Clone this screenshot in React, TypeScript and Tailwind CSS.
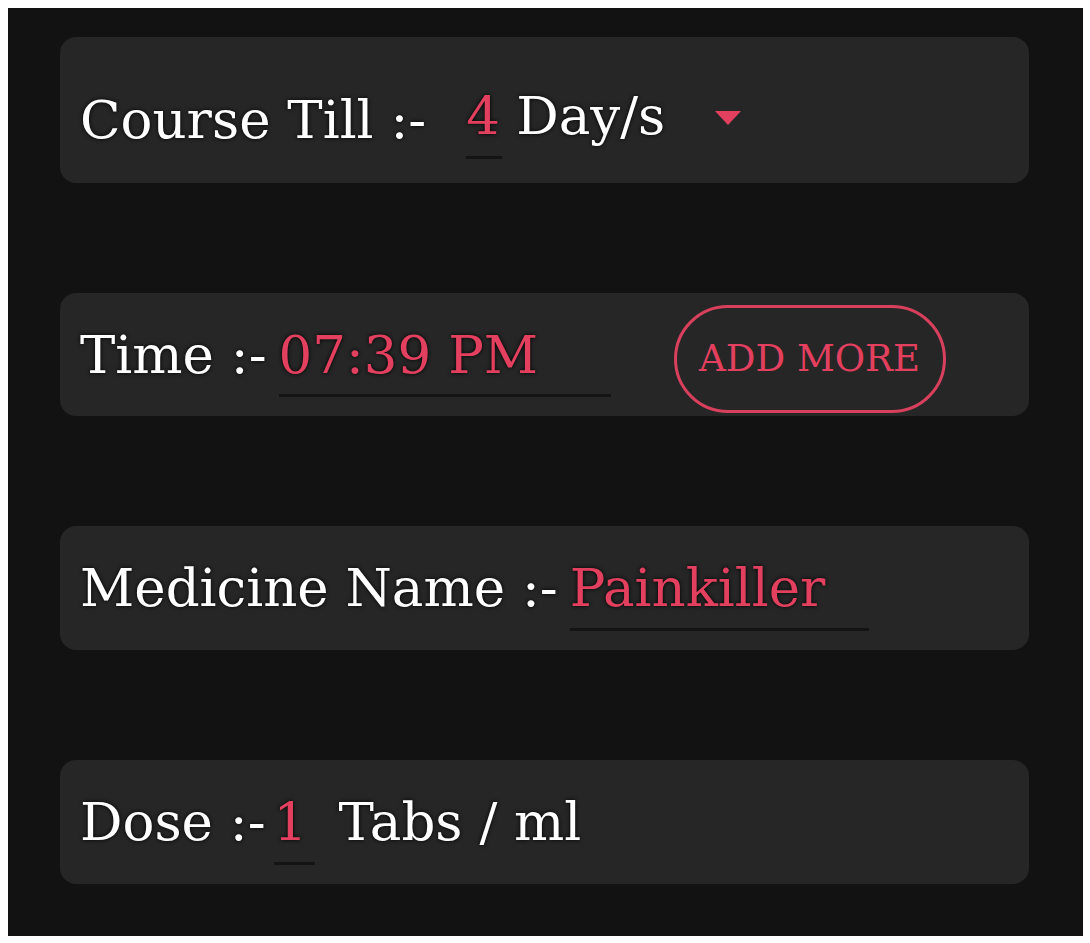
const font = { fontFamily: '"DejaVu Serif", "Liberation Serif", serif' };

function Underlined({ value, width }: { value: string; width: string }) {
  return (
    <span className={`relative inline-block ${width} text-[#e3405f]`}>
      {value}
      <span className="absolute left-0 right-0 -bottom-[3px] h-[3px] bg-[#141414]" />
    </span>
  );
}

export default function App() {
  return (
    <div className="bg-white w-[1090px] h-[943px] pt-2 pl-2" style={font}>
      <div className="bg-[#121212] w-[1075px] h-[928px] pt-[29px] pl-[52px] flex flex-col gap-[110px] [text-shadow:0_0_4px_#000]">
        <div className="w-[969px] h-[146px] rounded-2xl bg-[#262626] flex items-center pl-5 pt-3 text-white text-[53px]">
          <span className="mt-2">Course Till :-</span>
          <span className="ml-[40px]"><Underlined value="4" width="w-[36px]" /></span>
          <span className="ml-[14px]">Day/s</span>
          <svg className="ml-[50px] mt-1" width="26" height="15" viewBox="0 0 26 15">
            <path d="M0 0 L26 0 L13 14 Z" fill="#e3405f" />
          </svg>
        </div>

        <div className="w-[969px] h-[123px] rounded-2xl bg-[#262626] flex items-center pl-5 text-white text-[53px]">
          <span>Time :-</span>
          <span className="ml-3"><Underlined value="07:39 PM" width="w-[332px]" /></span>
          <button className="shrink-0 ml-[63px] mt-2 w-[272px] h-[108px] rounded-full border-[3px] border-[#d8405d] text-[#e3405f] text-[37px] flex items-center justify-center">
            ADD MORE
          </button>
        </div>

        <div className="w-[969px] h-[124px] rounded-2xl bg-[#262626] flex items-center pl-5 text-white text-[53px]">
          <span>Medicine Name :-</span>
          <span className="ml-3"><Underlined value="Painkiller" width="w-[299px]" /></span>
        </div>

        <div className="w-[969px] h-[124px] rounded-2xl bg-[#262626] flex items-center pl-5 text-white text-[53px]">
          <span>Dose :-</span>
          <span className="ml-2"><Underlined value="1" width="w-[41px]" /></span>
          <span className="ml-6">Tabs / ml</span>
        </div>
      </div>
    </div>
  );
}
